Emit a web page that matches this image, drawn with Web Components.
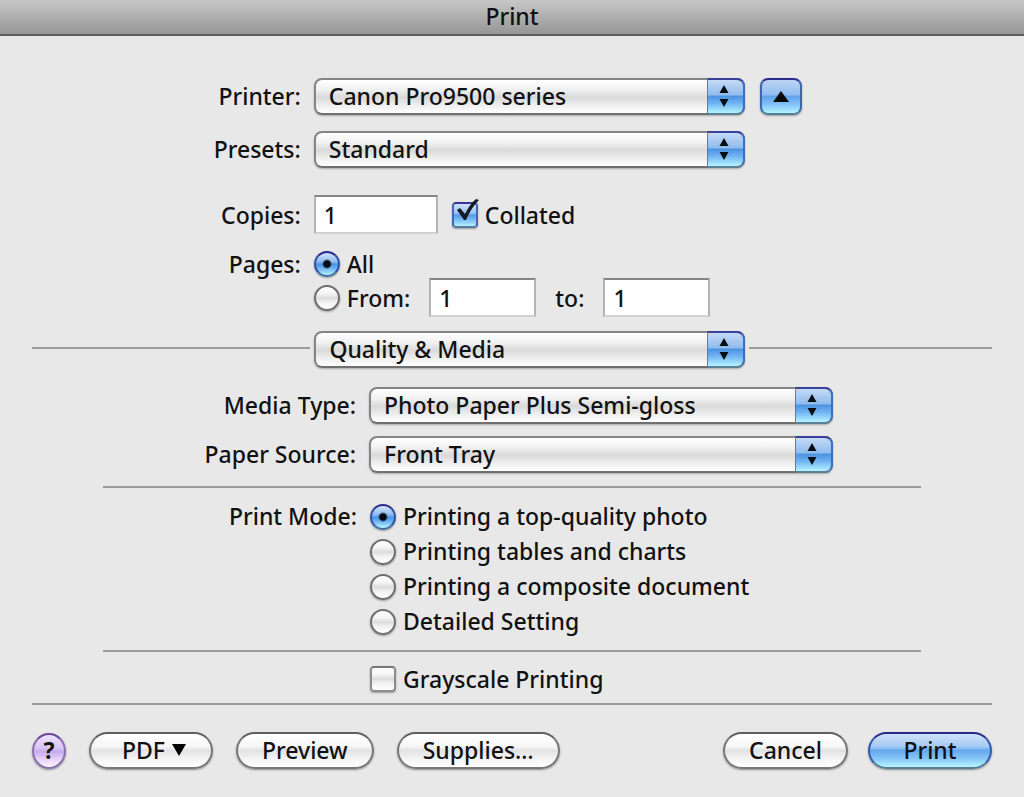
<!DOCTYPE html>
<html lang="en">
<head>
<meta charset="utf-8">
<meta name="viewport" content="width=device-width, initial-scale=1">
<title>Print</title>
<style>
    html{
        background: #e8e8e8;
    }
    body{
        margin: 0;
        color: #111;
        font: 500 23px/30px "Noto Sans", "Open Sans", sans-serif;
    }
</style>
</head>
<body>
<print-dialog heading="Print">
    <popup-field label="Printer:" value="Canon Pro9500 series">
        <expand-button></expand-button>
    </popup-field>
    <popup-field label="Presets:" value="Standard"></popup-field>
    <copies-field></copies-field>
    <pages-field></pages-field>
    <panel-picker value="Quality &amp; Media"></panel-picker>
    <popup-field class="media wide" label="Media Type:" value="Photo Paper Plus Semi-gloss"></popup-field>
    <popup-field class="source wide" label="Paper Source:" value="Front Tray"></popup-field>
    <hr-line class="inset"></hr-line>
    <mode-field label="Print Mode:" options="Printing a top-quality photo|Printing tables and charts|Printing a composite document|Detailed Setting"></mode-field>
    <hr-line class="inset"></hr-line>
    <gray-field label="Grayscale Printing"></gray-field>
    <hr-line class="bottom"></hr-line>
    <help-button slot="left"></help-button>
    <pill-button slot="left" arrow>PDF</pill-button>
    <pill-button slot="left">Preview</pill-button>
    <pill-button slot="left">Supplies…</pill-button>
    <pill-button slot="right">Cancel</pill-button>
    <pill-button slot="right" primary>Print</pill-button>
</print-dialog>

<script>
// styles used by every form row
const rowStyle = `
    *{
        box-sizing: border-box;
    }
    :host{
        display: block;
    }
    .row{
        display: grid;
        grid-template-columns: var(--label-width, 28%) minmax(0, 1fr);
        column-gap: 13px;
        align-items: center;
    }
    .caption{
        padding-bottom: 2px;
        text-align: right;
        white-space: nowrap;
    }
    .controls{
        display: flex;
        align-items: center;
    }
    input, select, button{
        margin: 0;
        font: inherit;
        color: inherit;
    }
    input[type=text]{
        width: 124px;
        height: 39px;
        padding: 1px 8px 0;
        border: 2px solid #b4b4b4;
        border-top-color: #858585;
        border-bottom-color: #d2d2d2;
        border-radius: 0;
        background: #fff;
        outline: none;
    }
`

const choiceStyle = `
    .choice{
        display: flex;
        align-items: center;
        gap: 7px;
        white-space: nowrap;
    }
    .box{
        position: relative;
        display: flex;
        flex: none;
    }
    input[type=radio], input[type=checkbox]{
        appearance: none;
        flex: none;
        width: 26px;
        height: 26px;
        border: 2px solid #6e6e6e;
        background: linear-gradient(#fff, #f4f4f4 30%, #dcdcdc 50%, #f2f2f2 70%, #fff);
        box-shadow: 0 1px 2px #0005;
    }
    input[type=radio]{
        border-radius: 50%;
    }
    input[type=checkbox]{
        border-color: #777 #8c8c8c #8c8c8c;
        border-radius: 4px;
    }
    input[type=radio]:checked{
        border-color: #29298c #3150a5 #44719f;
        background:
            radial-gradient(circle at 50% 50%, #050a14 3px, transparent 5px),
            linear-gradient(#d5e5f8, #91bcf0 38%, #4c94e5 52%, #79bdf5 75%, #b7f5ff);
    }
    input[type=checkbox]:checked{
        border-color: #34349b #4168b0 #557c9d;
        background: linear-gradient(#cfe1f7, #9ac2f1 42%, #5598e5 50%, #7fc2f6 75%, #b9f2ff);
    }
    .tick{
        position: absolute;
        left: 4px;
        top: -4px;
        pointer-events: none;
    }
`

const popupStyle = `
    .popup{
        position: relative;
        width: 431px;
        max-width: 100%;
    }
    select{
        display: block;
        appearance: none;
        width: 100%;
        height: 37px;
        padding: 0 50px 2px 13px;
        border: 2px solid #858585;
        border-bottom-color: #707070;
        border-radius: 8px;
        background: linear-gradient(#fff, #f0f0f0 30%, #d9d9d9 52%, #ededed 75%, #fff);
        box-shadow: 0 1px 2px #0004;
        outline: none;
    }
    .cap{
        position: absolute;
        top: 0;
        right: 0;
        bottom: 0;
        width: 38px;
        display: grid;
        place-items: center;
        box-sizing: border-box;
        padding: 0 3px 1px 0;
        border: 2px solid #3b6ebc;
        border-top-color: #3a3f9a;
        border-bottom-color: #5d7f96;
        border-left: 1px solid #3d84d0;
        border-radius: 0 8px 8px 0;
        background: linear-gradient(#c4dbf5, #92bced 44%, #4f94e1 50%, #6fb2f2 70%, #b4f4ff);
        pointer-events: none;
    }
`

const popup = value => `
    <div class="popup">
        <select id="field" aria-label="${value}"><option>${value}</option></select>
        <span class="cap">
            <svg width="12" height="24" viewBox="0 0 12 24"><path d="M6 1l4.500 8h-9zM6 23l4.500-8h-9z" fill="#080d12"/></svg>
        </span>
    </div>
`

class AquaElement extends HTMLElement{
    connectedCallback(){
        if(this.shadowRoot) return
        this.attachShadow({mode : 'open'}).innerHTML = this.render()
    }
    attr(name){
        return (this.getAttribute(name) || '').replace(/&/g, '&amp;')
    }
}

class PrintDialog extends AquaElement{
    render(){
        return `
            <style>
                :host{
                    display: block;
                }
                header{
                    box-sizing: border-box;
                    height: 36px;
                    border-bottom: 2px solid #5c5c5c;
                    background: linear-gradient(#c7c7c7, #969696);
                    text-align: center;
                    line-height: 33px;
                }
                h1{
                    margin: 0;
                    font: inherit;
                }
                main{
                    padding: 42px 32px 0;
                }
                ::slotted(popup-field){
                    margin-bottom: 16px;
                }
                ::slotted(copies-field){
                    margin: 27px 0 16px;
                }
                ::slotted(panel-picker){
                    margin: 14px 0 19px;
                }
                ::slotted(.wide){
                    --label-width: 324px;
                }
                ::slotted(.media){
                    margin-bottom: 12px;
                }
                ::slotted(.source){
                    margin-bottom: 13px;
                }
                ::slotted(mode-field), ::slotted(gray-field){
                    --label-width: 325px;
                    margin: 11px 0;
                }
                ::slotted(gray-field){
                    margin: 10px 0 7px;
                }
                ::slotted(.inset){
                    margin: 0 71px;
                }
                footer{
                    display: flex;
                    flex-wrap: wrap;
                    justify-content: space-between;
                    gap: 20px;
                    padding: 27px 32px;
                }
                .group{
                    display: flex;
                    align-items: center;
                    gap: 23px;
                }
                .group:last-child{
                    gap: 20px;
                }
            </style>
            <header><h1>${this.attr('heading')}</h1></header>
            <main><slot></slot></main>
            <footer>
                <div class="group"><slot name="left"></slot></div>
                <div class="group"><slot name="right"></slot></div>
            </footer>
        `
    }
}

class PopupField extends AquaElement{
    render(){
        return `
            <style>
                ${rowStyle}
                ${popupStyle}
                .controls{
                    gap: 15px;
                }
                :host(.wide) .popup{
                    width: 464px;
                }
            </style>
            <div class="row">
                <label class="caption" for="field">${this.attr('label')}</label>
                <div class="controls">${popup(this.attr('value'))}<slot></slot></div>
            </div>
        `
    }
}

class ExpandButton extends AquaElement{
    render(){
        return `
            <style>
                :host{
                    display: block;
                    flex: none;
                }
                button{
                    display: grid;
                    place-items: center;
                    width: 42px;
                    height: 37px;
                    padding: 0 0 2px;
                    border: 2px solid #3c66ad;
                    border-top-color: #2d2d91;
                    border-bottom-color: #557d96;
                    border-radius: 8px;
                    background: linear-gradient(#bcd5f4, #92bdf0 44%, #62a3ea 50%, #82c4f8 75%, #b4f4ff);
                    box-shadow: 0 1px 2px #0005;
                }
            </style>
            <button type="button" aria-label="Hide details">
                <svg width="16" height="12" viewBox="0 0 16 12"><path d="M8 1l8 11H0z" fill="#080808"/></svg>
            </button>
        `
    }
}

class CopiesField extends AquaElement{
    render(){
        return `
            <style>
                ${rowStyle}
                ${choiceStyle}
                .caption{
                    padding: 0;
                }
                .controls{
                    gap: 14px;
                }
            </style>
            <div class="row">
                <label class="caption" for="copies">Copies:</label>
                <div class="controls">
                    <input id="copies" type="text" value="1">
                    <label class="choice">
                        <span class="box">
                            <input type="checkbox" checked>
                            <svg class="tick" width="24" height="26" viewBox="0 0 24 26"><path d="M1 12l3-2 5 6C12 10 15 5 20 1l3 1C18 7 14 13 10 22H8z" fill="#141a26"/></svg>
                        </span>
                        Collated
                    </label>
                </div>
            </div>
        `
    }
}

class PagesField extends AquaElement{
    render(){
        return `
            <style>
                ${rowStyle}
                ${choiceStyle}
                .caption{
                    padding: 0;
                }
                .caption, .all{
                    height: 28px;
                    line-height: 28px;
                }
                .from{
                    grid-column: 2;
                    gap: 19px;
                }
                input[type=text]{
                    width: 107px;
                }
            </style>
            <div class="row" role="radiogroup" aria-labelledby="pages">
                <span class="caption" id="pages">Pages:</span>
                <label class="choice all"><input type="radio" name="pages" checked>All</label>
                <div class="controls from">
                    <label class="choice"><input type="radio" name="pages">From:</label>
                    <input type="text" value="1" aria-label="From page">
                    <label for="to">to:</label>
                    <input id="to" type="text" value="1">
                </div>
            </div>
        `
    }
}

// pop-up with a rule running out on both sides
class PanelPicker extends AquaElement{
    render(){
        return `
            <style>
                ${rowStyle}
                ${popupStyle}
                .picker{
                    display: grid;
                    grid-template-columns: 29% auto minmax(0, 1fr);
                    column-gap: 4px;
                    align-items: center;
                }
                hr-line{
                    margin-bottom: 3px;
                }
            </style>
            <div class="picker">
                <hr-line></hr-line>
                ${popup(this.attr('value'))}
                <hr-line></hr-line>
            </div>
        `
    }
}

class ModeField extends AquaElement{
    render(){
        const options = this.attr('options').split('|')
        return `
            <style>
                ${rowStyle}
                ${choiceStyle}
                .row{
                    align-items: start;
                }
                .caption, .choice{
                    height: 35px;
                    line-height: 35px;
                }
            </style>
            <div class="row" role="radiogroup" aria-labelledby="mode">
                <span class="caption" id="mode">${this.attr('label')}</span>
                <div>
                    ${options.map((text, i) => `<label class="choice"><input type="radio" name="mode" ${i ? '' : 'checked'}>${text}</label>`).join('')}
                </div>
            </div>
        `
    }
}

class GrayField extends AquaElement{
    render(){
        return `
            <style>
                ${rowStyle}
                ${choiceStyle}
                .choice{
                    grid-column: 2;
                    height: 34px;
                }
            </style>
            <div class="row">
                <label class="choice"><input type="checkbox">${this.attr('label')}</label>
            </div>
        `
    }
}

class HrLine extends AquaElement{
    render(){
        return `
            <style>
                :host{
                    display: block;
                    height: 2px;
                    background: #9b9b9b;
                }
            </style>
        `
    }
}

class HelpButton extends AquaElement{
    render(){
        return `
            <style>
                button{
                    display: block;
                    width: 34px;
                    height: 36px;
                    padding: 0 0 2px;
                    border: 2px solid #8a70ae;
                    border-top-color: #68469a;
                    border-radius: 50%;
                    background: linear-gradient(#eee2fb, #d9c6f7 40%, #c3abee 52%, #e6d2fb 75%, #fff4ff);
                    box-shadow: 0 1px 2px #0006;
                    font: inherit;
                    font-weight: 700;
                    line-height: 30px;
                    color: #111;
                }
            </style>
            <button type="button" aria-label="Help">?</button>
        `
    }
}

class PillButton extends AquaElement{
    render(){
        return `
            <style>
                button{
                    display: flex;
                    align-items: center;
                    justify-content: center;
                    gap: 7px;
                    min-width: 124px;
                    height: 37px;
                    padding: 0 24px 2px;
                    border: 2px solid #777;
                    border-top-color: #5f5f5f;
                    border-radius: 19px;
                    background: linear-gradient(#fff, #f6f6f6 38%, #e2e2e2 50%, #f4f4f4 75%, #fff);
                    box-shadow: 0 1px 2px #0006;
                    font: inherit;
                    color: inherit;
                    white-space: nowrap;
                }
                :host([arrow]) button{
                    padding-right: 18px;
                }
                :host([primary]) button{
                    border-color: #29298c #3058ad #557d96;
                    background: linear-gradient(#cfe2f8, #a5caf3 38%, #65a8ee 50%, #86c6f8 75%, #b9f6ff);
                }
            </style>
            <button type="button">
                <slot></slot>
                ${this.hasAttribute('arrow') ? '<svg width="14" height="12" viewBox="0 0 14 12"><path d="M0 0h14L7 12z" fill="#000"/></svg>' : ''}
            </button>
        `
    }
}

customElements.define('print-dialog', PrintDialog)
customElements.define('popup-field', PopupField)
customElements.define('expand-button', ExpandButton)
customElements.define('copies-field', CopiesField)
customElements.define('pages-field', PagesField)
customElements.define('panel-picker', PanelPicker)
customElements.define('mode-field', ModeField)
customElements.define('gray-field', GrayField)
customElements.define('hr-line', HrLine)
customElements.define('help-button', HelpButton)
customElements.define('pill-button', PillButton)
</script>
</body>
</html>
